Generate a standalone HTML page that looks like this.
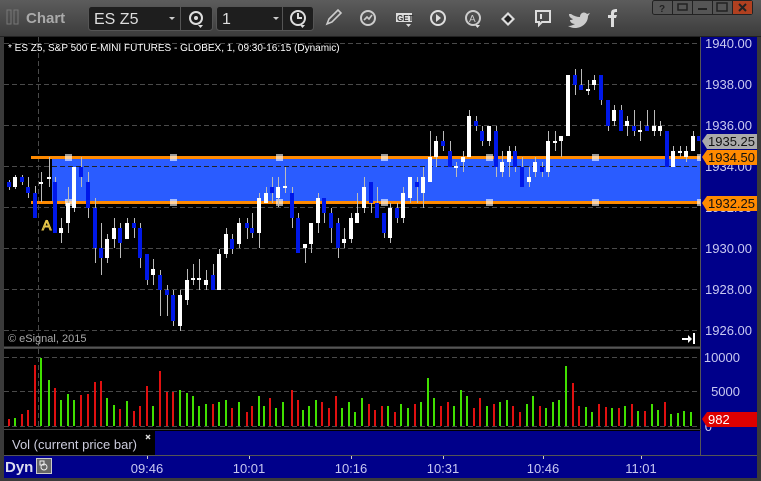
<!DOCTYPE html>
<html><head><meta charset="utf-8"><style>
*{margin:0;padding:0;box-sizing:border-box}
body{width:761px;height:481px;background:#2e2e2e;overflow:hidden;position:relative;font-family:"Liberation Sans",sans-serif}
.tb{position:absolute;left:0;top:0;width:761px;height:37px;background:linear-gradient(#5c5c5c,#3c3c3c);border-bottom:1px solid #222}
.t{position:absolute;white-space:nowrap}
</style></head><body>
<div class="tb"></div>
<svg width="761" height="481" style="position:absolute;left:0;top:0" font-family="Liberation Sans, sans-serif">
<!-- toolbar -->
<rect x="7" y="10" width="4" height="14" fill="none" stroke="#777"/><rect x="14" y="10" width="4" height="14" fill="none" stroke="#777"/>
<text x="26" y="23" fill="#aaa" font-size="15" font-weight="bold">Chart</text>
<rect x="88.5" y="6.5" width="124" height="24" rx="3" fill="#1e1e1e" stroke="#555"/>
<line x1="180.5" y1="7" x2="180.5" y2="30" stroke="#555"/>
<text x="94" y="24" fill="#ddd" font-size="16">ES Z5</text>
<path d="M169 17h6l-3 3z" fill="#ccc"/>
<circle cx="196" cy="18" r="6" fill="none" stroke="#ddd" stroke-width="2"/><circle cx="196" cy="18" r="2" fill="#ddd"/><path d="M198 25h5l-2.5 3z" fill="#ddd"/>
<rect x="216.5" y="6.5" width="97" height="24" rx="3" fill="#1e1e1e" stroke="#555"/>
<line x1="282.5" y1="7" x2="282.5" y2="30" stroke="#555"/>
<text x="222" y="24" fill="#ddd" font-size="16">1</text>
<path d="M273 17h6l-3 3z" fill="#ccc"/>
<circle cx="298" cy="18" r="7" fill="none" stroke="#ddd" stroke-width="2"/><path d="M298 13v5h4" stroke="#ddd" stroke-width="2" fill="none"/><path d="M300 25h5l-2.5 3z" fill="#ddd"/>
<path d="M327 24l2-5 9-9 3 3-9 9z" fill="none" stroke="#ccc" stroke-width="1.6"/>
<circle cx="368" cy="18" r="7" fill="none" stroke="#ccc" stroke-width="2"/><path d="M364 20l3-3 2 2 3-4" stroke="#ccc" stroke-width="1.6" fill="none"/>
<rect x="396" y="13" width="16" height="9" fill="#ddd"/><text x="397" y="21" font-size="8" font-weight="bold" fill="#333">GET</text><path d="M406 24h5l-2.5 3z" fill="#ddd"/>
<circle cx="438" cy="18" r="7" fill="none" stroke="#ddd" stroke-width="2"/><path d="M436 14v8l5-4z" fill="#ddd"/>
<circle cx="473" cy="18" r="7" fill="none" stroke="#ccc" stroke-width="2"/><text x="469" y="22" font-size="10" fill="#ccc">A</text><path d="M475 25h5l-2.5 3z" fill="#ddd"/>
<path d="M501 19l7-7 7 7-7 7z" fill="#ddd"/><path d="M504 19l4-4 4 4-4 4z" fill="#222"/>
<path d="M536 11h14v11h-8l-3 3v-3h-3z" fill="none" stroke="#ddd" stroke-width="2"/><line x1="541" y1="14" x2="541" y2="19" stroke="#ddd" stroke-width="2"/>
<path d="M571 14c3 2 6 3 9 3 0-4 4-6 7-3l3-1-2 3c0 7-6 12-13 12-3 0-5-1-7-2 3 0 5-1 7-2-3 0-5-2-5-4 1 0 2 0 3-1-3-1-4-3-4-5z" fill="#ccc"/>
<path d="M611 27v-9h-3v-3h3v-2c0-3 2-4 6-4v3c-2 0-3 0-3 2v1h3l-1 3h-2v9z" fill="#ddd"/>
<rect x="652.5" y="0.5" width="100" height="14" rx="2" fill="#555" stroke="#222"/>
<rect x="733" y="1" width="19" height="13" fill="#b04020"/>
<path d="M672.5 1v13M692.5 1v13M712.5 1v13M732.5 1v13" stroke="#222"/>
<text x="659" y="12" font-size="10" fill="#222" font-weight="bold">?</text>
<rect x="678" y="4" width="9" height="6" fill="none" stroke="#222" stroke-width="1.5"/>
<line x1="698" y1="9" x2="707" y2="9" stroke="#222" stroke-width="2"/>
<rect x="717" y="3" width="10" height="8" fill="none" stroke="#222" stroke-width="1.5"/>
<path d="M739 4l7 7M746 4l-7 7" stroke="#222" stroke-width="2"/>
<!-- chart pane -->
<rect x="4" y="37" width="697" height="310" fill="#000"/>
<rect x="4" y="349" width="697" height="80" fill="#000"/>
<rect x="4" y="429" width="697" height="27" fill="#000"/>
<rect x="155" y="431" width="546" height="24" fill="#00008a"/>
<rect x="701" y="37" width="56" height="419" fill="#00008a"/>
<rect x="4" y="456" width="753" height="22" fill="#00008a"/>
<line x1="700.5" y1="37" x2="700.5" y2="456" stroke="#555"/>
<line x1="4" y1="347.5" x2="701" y2="347.5" stroke="#555" stroke-width="2"/>
<line x1="4" y1="429.5" x2="701" y2="429.5" stroke="#444"/>
<line x1="4" y1="455.5" x2="757" y2="455.5" stroke="#555"/>
<g stroke="#4a4a4a" stroke-dasharray="5,3">
<path d="M4 43.5H700M4 84.5H700M4 125.5H700M4 166.5H700M4 207.5H700M4 248.5H700M4 289.5H700M4 330.5H700M4 357.5H700M4 391.5H700M4 426.5H700"/>
<path d="M38.5 37V347M38.5 349V429"/>
</g>
<text x="8" y="51" fill="#fff" font-size="10">* ES Z5, S&amp;P 500 E-MINI FUTURES - GLOBEX, 1, 09:30-16:15 (Dynamic)</text>
<!-- band -->
<rect x="52" y="158" width="648" height="44" fill="#2a5cff"/>
<rect x="31" y="156" width="669" height="3" fill="#ff8a00"/>
<rect x="31" y="201" width="669" height="3" fill="#ff8a00"/>
<line x1="52" y1="166.5" x2="700" y2="166.5" stroke="#222" stroke-dasharray="5,3"/>
<g fill="#fff" fill-opacity="0.6">
<rect x="65" y="154" width="7" height="7"/><rect x="170" y="154" width="7" height="7"/><rect x="276" y="154" width="7" height="7"/><rect x="381" y="154" width="7" height="7"/><rect x="486" y="154" width="7" height="7"/><rect x="592" y="154" width="7" height="7"/><rect x="697" y="154" width="4" height="7"/>
<rect x="65" y="199" width="7" height="7"/><rect x="170" y="199" width="7" height="7"/><rect x="276" y="199" width="7" height="7"/><rect x="381" y="199" width="7" height="7"/><rect x="486" y="199" width="7" height="7"/><rect x="592" y="199" width="7" height="7"/><rect x="697" y="199" width="4" height="7"/>
</g>
<text x="42" y="230" fill="#000" stroke="#e8c84a" stroke-width="1" font-size="14">A</text>
<!-- wicks -->
<path stroke="#bbb" stroke-width="1" fill="none" d="M9.5 180V190M15.5 175V189M22.5 175V185M28.5 177V198M35.5 186V218M41.5 172V202M49.5 157V187M55.5 177V233M61.5 218V243M68.5 187V233M74.5 167V212M81.5 157V187M88.5 172V218M95.5 198V263M101.5 223V275M107.5 234V263M114.5 218V248M120.5 223V258M127.5 218V239M134.5 218V238M140.5 223V268M147.5 254V285M153.5 259V285M160.5 270V316M167.5 285V316M173.5 290V326M180.5 290V331M187.5 269V305M193.5 264V285M199.5 259V290M206.5 270V290M213.5 264V290M219.5 249V290M226.5 228V258M232.5 234V254M239.5 218V248M247.5 218V239M252.5 213V238M259.5 193V248M266.5 187V203M272.5 177V203M278.5 177V207M285.5 167V193M292.5 187V228M298.5 213V253M305.5 244V263M311.5 223V253M318.5 193V233M324.5 198V223M331.5 208V243M338.5 218V258M344.5 228V248M351.5 213V243M357.5 193V223M364.5 177V213M371.5 182V213M377.5 187V218M384.5 213V238M390.5 203V243M397.5 203V223M403.5 187V223M410.5 177V203M417.5 177V203M423.5 167V208M430.5 131V182M436.5 136V167M443.5 131V151M450.5 141V167M456.5 162V177M463.5 151V172M469.5 110V157M476.5 116V131M482.5 126V146M489.5 126V146M496.5 126V177M502.5 151V177M509.5 146V177M515.5 146V172M522.5 157V187M529.5 167V187M535.5 157V177M542.5 162V177M548.5 131V177M555.5 131V151M561.5 136V157M568.5 75V136M575.5 69V95M581.5 69V90M588.5 80V95M594.5 75V90M601.5 75V105M608.5 100V131M614.5 105V126M621.5 105V131M627.5 116V136M634.5 110V136M640.5 121V141M647.5 110V131M654.5 110V136M660.5 121V136M667.5 131V167M673.5 146V167M680.5 146V157M686.5 146V162M693.5 131V151"/>
<!-- white bodies -->
<path fill="#fff" d="M13 177h4v10h-4zM39 182h4v2h-4zM47 177h4v2h-4zM59 228h4v5h-4zM66 203h4v20h-4zM72 167h4v41h-4zM105 239h4v19h-4zM112 228h4v11h-4zM125 223h4v16h-4zM151 269h4v6h-4zM178 295h4v31h-4zM185 280h4v20h-4zM191 278h4v2h-4zM197 278h4v2h-4zM204 280h4v5h-4zM217 254h4v36h-4zM224 234h4v20h-4zM237 223h4v21h-4zM257 198h4v35h-4zM264 193h4v10h-4zM276 187h4v11h-4zM283 186h4v2h-4zM303 244h4v4h-4zM309 223h4v21h-4zM316 198h4v25h-4zM342 239h4v4h-4zM349 218h4v21h-4zM355 213h4v10h-4zM362 187h4v21h-4zM388 208h4v30h-4zM401 193h4v25h-4zM408 177h4v21h-4zM421 177h4v16h-4zM428 157h4v25h-4zM434 141h4v16h-4zM454 166h4v2h-4zM461 157h4v5h-4zM467 116h4v41h-4zM487 126h4v15h-4zM500 162h4v10h-4zM507 151h4v11h-4zM527 177h4v5h-4zM533 162h4v10h-4zM546 141h4v31h-4zM553 141h4v2h-4zM559 136h4v5h-4zM566 75h4v61h-4zM586 89h4v2h-4zM592 80h4v5h-4zM612 110h4v11h-4zM625 121h4v5h-4zM638 130h4v2h-4zM652 126h4v5h-4zM658 126h4v5h-4zM671 151h4v16h-4zM678 151h4v2h-4zM684 151h4v6h-4zM691 136h4v15h-4z"/>
<!-- blue bodies -->
<path fill="#0018e8" d="M7 182h4v5h-4zM20 177h4v5h-4zM26 187h4v6h-4zM33 193h4v25h-4zM53 182h4v51h-4zM79 167h4v10h-4zM86 182h4v26h-4zM93 208h4v40h-4zM99 248h4v10h-4zM118 228h4v15h-4zM132 223h4v5h-4zM138 228h4v30h-4zM145 254h4v26h-4zM158 275h4v15h-4zM165 290h4v5h-4zM171 295h4v26h-4zM211 275h4v15h-4zM230 239h4v10h-4zM245 223h4v5h-4zM250 228h4v5h-4zM270 187h4v6h-4zM290 193h4v25h-4zM296 218h4v35h-4zM322 198h4v15h-4zM329 213h4v15h-4zM336 223h4v25h-4zM369 182h4v21h-4zM375 203h4v15h-4zM382 213h4v20h-4zM395 208h4v10h-4zM415 182h4v5h-4zM441 141h4v5h-4zM448 151h4v16h-4zM474 121h4v5h-4zM480 131h4v10h-4zM494 131h4v36h-4zM513 151h4v16h-4zM520 167h4v20h-4zM540 167h4v5h-4zM573 75h4v10h-4zM579 85h4v5h-4zM599 75h4v25h-4zM606 100h4v26h-4zM619 110h4v21h-4zM632 126h4v5h-4zM645 126h4v5h-4zM665 131h4v36h-4zM697 136h3v5h-3z"/>
<!-- volume -->
<path stroke="#e01010" stroke-width="2" d="M9 426v-7M22 426v-12M28 426v-16M35 426v-61M55 426v-38M81 426v-31M88 426v-32M95 426v-44M101 426v-45M120 426v-17M134 426v-15M140 426v-20M147 426v-40M160 426v-55M167 426v-34M173 426v-34M213 426v-22M232 426v-18M247 426v-14M252 426v-20M270 426v-28M292 426v-36M298 426v-26M322 426v-24M329 426v-18M336 426v-30M369 426v-22M375 426v-16M382 426v-20M395 426v-14M415 426v-22M441 426v-20M448 426v-24M474 426v-18M480 426v-28M494 426v-22M513 426v-20M520 426v-14M540 426v-20M573 426v-43M579 426v-20M599 426v-22M606 426v-19M619 426v-18M632 426v-22M645 426v-15M665 426v-24"/>
<path stroke="#40e000" stroke-width="2" d="M15 426v-8M41 426v-68M49 426v-46M61 426v-26M68 426v-32M74 426v-26M107 426v-28M114 426v-21M127 426v-25M153 426v-20M180 426v-36M187 426v-33M193 426v-30M199 426v-20M206 426v-22M219 426v-24M226 426v-26M239 426v-24M259 426v-30M264 426v-20M276 426v-18M283 426v-24M303 426v-16M309 426v-20M316 426v-26M342 426v-18M349 426v-24M355 426v-14M362 426v-28M388 426v-20M401 426v-22M408 426v-18M421 426v-24M428 426v-48M434 426v-28M454 426v-20M461 426v-36M467 426v-30M487 426v-20M500 426v-24M507 426v-26M527 426v-22M533 426v-30M546 426v-18M553 426v-24M559 426v-26M566 426v-60M586 426v-19M592 426v-14M612 426v-18M625 426v-20M638 426v-15M652 426v-22M658 426v-16M671 426v-12M678 426v-13M684 426v-15M691 426v-14"/>
<text x="8" y="342" fill="#aaa" font-size="11">© eSignal, 2015</text>
<path d="M682 338h6v-3l4 4-4 4v-3h-6z" fill="#fff"/><rect x="693" y="333" width="2" height="11" fill="#fff"/>
<text x="12" y="449" fill="#ccd" font-size="13">Vol (current price bar)</text>
<path d="M146 435l4 4M150 435l-4 4" stroke="#ddd" stroke-width="1.4"/>
<!-- right axis -->
<g fill="#c8c8f0" font-size="13" text-anchor="end">
<text x="752" y="48">1940.00</text><text x="752" y="89">1938.00</text><text x="752" y="130">1936.00</text><text x="752" y="171">1934.00</text><text x="752" y="212">1932.00</text><text x="752" y="253">1930.00</text><text x="752" y="294">1928.00</text><text x="752" y="335">1926.00</text>
<text x="740" y="362">10000</text><text x="740" y="396">5000</text><text x="712" y="431">0</text>
</g>
<path d="M702 141l5-7h50v15h-50z" fill="#aaa"/><text x="708" y="146" font-size="13" fill="#111">1935.25</text>
<path d="M702 157l5-7h50v15h-50z" fill="#ff8a00"/><text x="708" y="162" font-size="13" fill="#111">1934.50</text>
<path d="M702 203l5-7h50v15h-50z" fill="#ff8a00"/><text x="708" y="208" font-size="13" fill="#111">1932.25</text>
<path d="M702 419l5-7h50v15h-50z" fill="#dd0000"/><text x="708" y="424" font-size="13" fill="#fff">982</text>
<!-- time axis -->
<text x="5" y="472" fill="#dde" font-size="15" font-weight="bold">Dyn</text>
<rect x="36.5" y="458.5" width="15" height="15" fill="#666" stroke="#ccc"/><circle cx="44" cy="467" r="3" fill="none" stroke="#eee"/><rect x="40" y="461" width="4" height="4" fill="none" stroke="#eee"/>
<g fill="#c8c8f0" font-size="13" text-anchor="middle">
<text x="147" y="473">09:46</text><text x="249" y="473">10:01</text><text x="351" y="473">10:16</text><text x="443" y="473">10:31</text><text x="543" y="473">10:46</text><text x="641" y="473">11:01</text>
</g>
<path d="M147.5 456v3M249.5 456v3M351.5 456v3M443.5 456v3M543.5 456v3M641.5 456v3" stroke="#ccc"/>
<rect x="0" y="37" width="4" height="444" fill="#3a3a3a"/><rect x="757" y="37" width="4" height="444" fill="#3a3a3a"/><rect x="0" y="478" width="761" height="3" fill="#3a3a3a"/>
</svg>
</body></html>
